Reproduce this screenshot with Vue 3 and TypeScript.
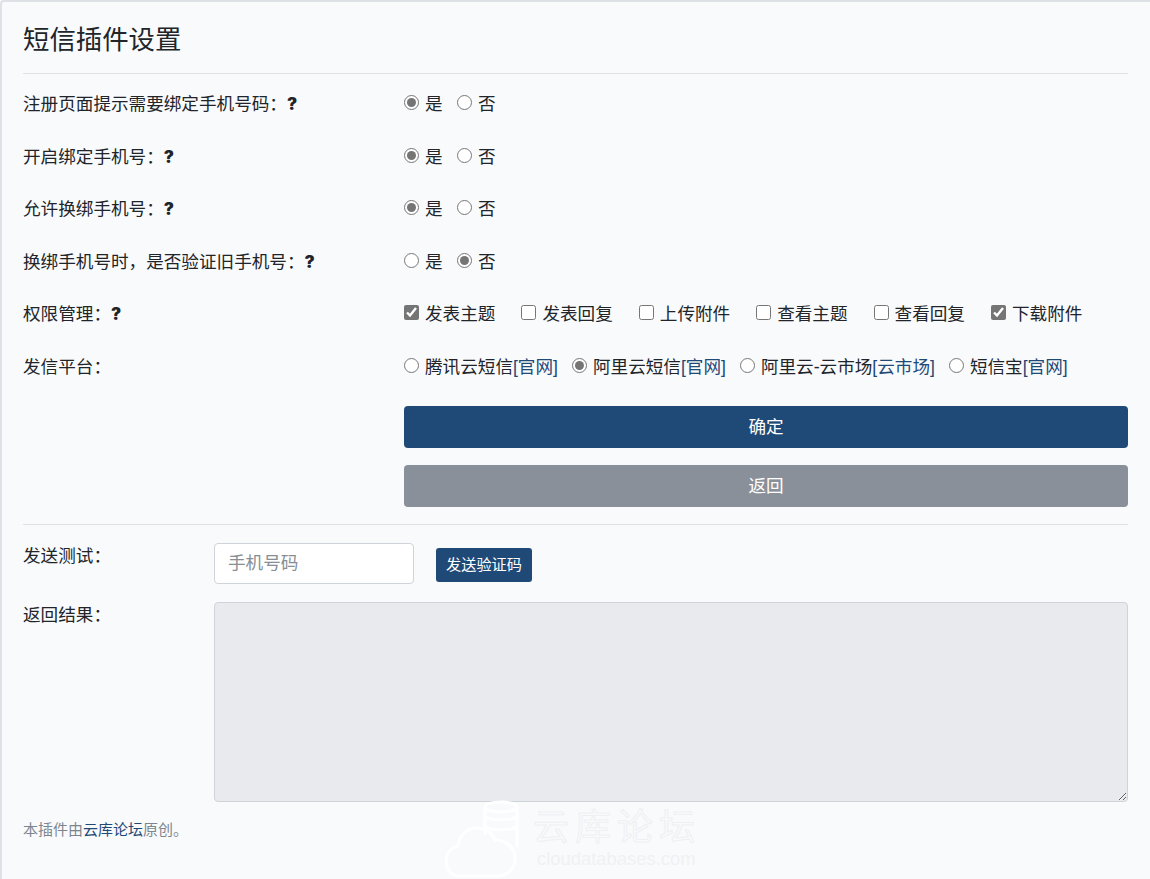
<script setup lang="ts">
import { reactive } from "vue";

type ChoiceRow = { key: string; label: string; value: string };

// full-width punctuation, as in the original labels
const COLON = "\uFF1A";
const COMMA = "\uFF0C";

const yesNoRows = reactive<ChoiceRow[]>([
  { key: "tip", label: `注册页面提示需要绑定手机号码${COLON}`, value: "yes" },
  { key: "bind", label: `开启绑定手机号${COLON}`, value: "yes" },
  { key: "rebind", label: `允许换绑手机号${COLON}`, value: "yes" },
  { key: "verify", label: `换绑手机号时${COMMA}是否验证旧手机号${COLON}`, value: "no" },
]);

const perms = reactive([
  { name: "发表主题", on: true },
  { name: "发表回复", on: false },
  { name: "上传附件", on: false },
  { name: "查看主题", on: false },
  { name: "查看回复", on: false },
  { name: "下载附件", on: true },
]);

const platforms = [
  { id: "tencent", name: "腾讯云短信", link: "[官网]" },
  { id: "aliyun", name: "阿里云短信", link: "[官网]" },
  { id: "market", name: "阿里云-云市场", link: "[云市场]" },
  { id: "smsbao", name: "短信宝", link: "[官网]" },
];

const form = reactive({ platform: "aliyun", phone: "", result: "" });
</script>

<template>
  <div class="page">
    <h1 class="title">短信插件设置</h1>
    <hr class="rule rule-top" />

    <div v-for="row in yesNoRows" :key="row.key" class="row">
      <div class="label">{{ row.label }}<span class="help">?</span></div>
      <div class="choices">
        <label class="choice yesno">
          <input v-model="row.value" type="radio" :name="row.key" value="yes" />是
        </label>
        <label class="choice yesno">
          <input v-model="row.value" type="radio" :name="row.key" value="no" />否
        </label>
      </div>
    </div>

    <div class="row">
      <div class="label">权限管理{{ COLON }}<span class="help">?</span></div>
      <div class="choices">
        <label v-for="perm in perms" :key="perm.name" class="choice perm">
          <input v-model="perm.on" type="checkbox" />{{ perm.name }}
        </label>
      </div>
    </div>

    <div class="row">
      <div class="label">发信平台{{ COLON }}</div>
      <div class="choices">
        <label v-for="item in platforms" :key="item.id" class="choice platform">
          <input v-model="form.platform" type="radio" name="platform" :value="item.id" />{{ item.name }}<a href="#" class="link">{{ item.link }}</a>
        </label>
      </div>
    </div>

    <div class="actions">
      <button type="button" class="btn btn-primary">确定</button>
      <button type="button" class="btn btn-muted">返回</button>
    </div>

    <hr class="rule rule-mid" />

    <div class="test-row">
      <div class="test-label">发送测试{{ COLON }}</div>
      <input v-model="form.phone" class="phone" type="text" placeholder="手机号码" />
      <button type="button" class="send">发送验证码</button>
    </div>

    <div class="test-row result-row">
      <div class="test-label">返回结果{{ COLON }}</div>
      <textarea v-model="form.result" class="result" disabled></textarea>
    </div>

    <p class="footer">本插件由<a href="#" class="link">云库论坛</a>原创。</p>

    <div class="watermark" aria-hidden="true">
      <svg class="wm-icon" width="82" height="82" viewBox="0 0 82 82" fill="none" stroke="#fff" stroke-width="3">
        <ellipse cx="56" cy="7" rx="16" ry="5" />
        <path d="M40 7v28M72 7v40M40 16c4 5 28 5 32 0M40 26c4 5 28 5 32 0" />
        <path d="M14 76C4 76 1 66 1 61c0-9 6-14 12-15 1-11 9-18 19-18 9 0 15 5 18 12 10 0 20 7 20 18 0 11-8 18-18 18z" />
      </svg>
      <div class="wm-text">
        <div class="wm-name">云库论坛</div>
        <div class="wm-url">cloudatabases.com</div>
      </div>
    </div>
  </div>
</template>

<style>
html,
body {
  background: #f9fafc;
}
</style>

<style scoped>
.page {
  position: relative;
  box-sizing: border-box;
  height: 879px;
  padding: 20px 22px 0 21px;
  overflow: hidden;
  background: #f9fafc;
  border-top: 2px solid #dee2e6;
  border-left: 2px solid #dee2e6;
  border-top-left-radius: 4px;
  color: #212529;
  font-family: "Liberation Sans", "Noto Sans CJK SC", sans-serif;
  font-size: 17.6px;
  line-height: 26.4px;
}

.title {
  height: 34px;
  margin: 0;
  font-size: 26.4px;
  font-weight: 400;
  line-height: 36px;
}

.rule {
  height: 1px;
  margin: 0;
  background: #dfe2e6;
  border: 0;
}

.rule-top {
  margin: 17px 0 17.4px;
}

.rule-mid {
  margin: 17px 0 18px;
}

.row {
  display: flex;
  align-items: center;
  height: 26.4px;
  margin-bottom: 26.1px;
}

.label {
  flex: 0 0 381px;
}

.help {
  color: #212529;
  font-family: Inter, sans-serif;
  font-size: 17px;
  font-weight: 900;
}

.choices {
  display: flex;
  align-items: center;
}

.choice {
  display: inline-flex;
  align-items: center;
  white-space: nowrap;
}

.choice input {
  flex: none;
  width: 15px;
  height: 15px;
  margin: -4px 6px 0 0;
  accent-color: #757575;
}

.yesno {
  margin-right: 14.4px;
}

.perm {
  margin-right: 26px;
}

.platform {
  margin-right: 14px;
}

.link {
  color: #1f4a77;
  text-decoration: none;
}

.actions {
  display: flex;
  flex-direction: column;
  gap: 17px;
  margin: -0.4px 0 0 381px;
}

.btn {
  height: 42px;
  padding: 0;
  border: 0;
  border-radius: 4px;
  color: #fff;
  font: inherit;
}

.btn-primary,
.send {
  background: #1f4a77;
}

.btn-muted {
  background: #8a9099;
}

.test-row {
  display: flex;
  align-items: center;
}

.test-label {
  flex: 0 0 191px;
  align-self: flex-start;
}

.phone {
  box-sizing: border-box;
  width: 200px;
  height: 41px;
  padding: 0 13px;
  background: #fff;
  border: 1px solid #ced4da;
  border-radius: 4px;
  color: #212529;
  font: inherit;
  outline: none;
}

.phone::placeholder {
  color: #868e96;
}

.send {
  height: 34px;
  margin: 3px 0 0 22px;
  padding: 0 10px 4px;
  border: 0;
  border-radius: 3px;
  color: #fff;
  font-family: inherit;
  font-size: 15.2px;
}

.result-row {
  align-items: flex-start;
  margin-top: 18px;
}

.result {
  display: block;
  box-sizing: border-box;
  flex: 1;
  height: 200px;
  background: #e9eaed;
  border: 1px solid #ced4da;
  border-radius: 4px;
  outline: none;
}

.footer {
  margin: 17px 0 0;
  color: #7d868e;
  font-size: 15px;
  line-height: 21px;
}

.watermark {
  position: absolute;
  top: 798px;
  left: 443px;
  display: flex;
  gap: 6px;
  pointer-events: none;
}

.wm-icon {
  flex: none;
}

.wm-text {
  padding-top: 6px;
}

.wm-name {
  color: transparent;
  font-size: 36px;
  line-height: 44px;
  letter-spacing: 6px;
  -webkit-text-stroke: 1px #eef0f3;
}

.wm-url {
  margin-left: 4px;
  color: #f0f1f4;
  font-size: 18.4px;
  line-height: 18px;
}
</style>
